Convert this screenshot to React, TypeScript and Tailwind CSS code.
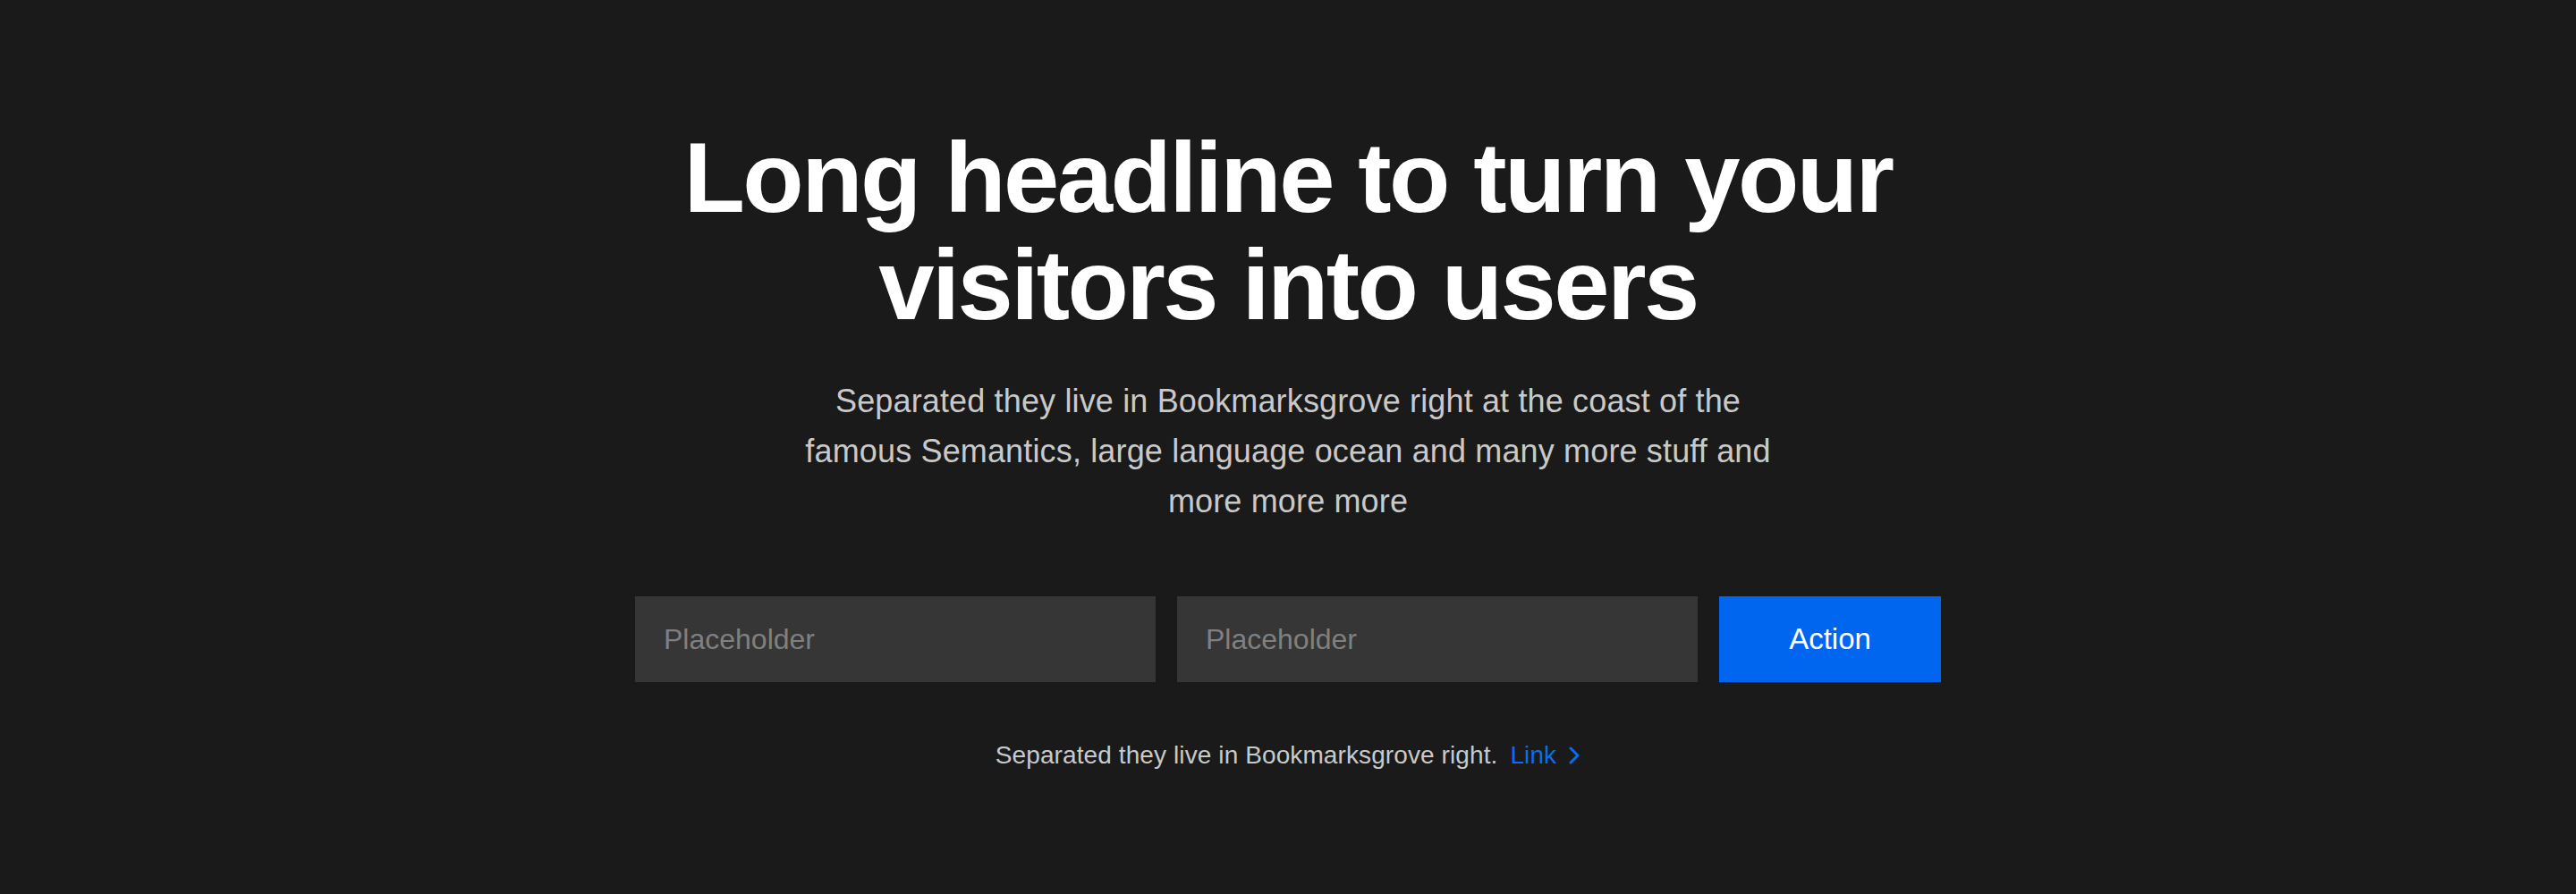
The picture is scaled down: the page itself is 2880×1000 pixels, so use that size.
import React from 'react';

const HeroSignup: React.FC = () => {
  return (
    <section className="h-[1000px] w-full overflow-hidden bg-[#1a1a1a] pt-[139px] font-['Liberation_Sans',Arial,sans-serif]">
      <div className="mx-auto flex w-full flex-col items-center">
        {/* Headline */}
        <h1 className="text-center text-[112px] font-bold leading-[120px] tracking-[-2.6px] text-white">
          Long headline to turn your
          <br />
          visitors into users
        </h1>

        <p className="mt-[42px] max-w-[1100px] text-center text-[36px] leading-[56px] tracking-[0.15px] text-[#c9c9c9]">
          Separated they live in Bookmarksgrove right at the coast of the famous Semantics, large language ocean and many
          more stuff and more more more
        </p>

        {/* Form */}
        <form className="mt-[78px] flex items-stretch gap-6" onSubmit={(e) => e.preventDefault()}>
          <input
            type="text"
            placeholder="Placeholder"
            className="h-[96px] w-[582px] bg-[#363636] px-8 text-[32px] text-white outline-none placeholder:text-[#808080]"
          />
          <input
            type="text"
            placeholder="Placeholder"
            className="h-[96px] w-[582px] bg-[#363636] px-8 text-[32px] text-white outline-none placeholder:text-[#808080]"
          />
          <button type="submit" className="h-[96px] w-[248px] bg-[#0066f0] text-[33px] text-white">
            Action
          </button>
        </form>

        <div className="mt-[62px] flex items-center text-[28px] leading-[40px] tracking-[0.1px] text-[#c9c9c9]">
          <span>Separated they live in Bookmarksgrove right.</span>
          <a href="#" className="ml-[14px] flex items-center text-[#0a6cf0]">
            Link
            <svg className="ml-[13px]" width="14" height="20" viewBox="0 0 14 20" fill="none">
              <polyline points="3,2 11,10 3,18" stroke="#0a6cf0" strokeWidth="3" strokeLinecap="round" strokeLinejoin="round" />
            </svg>
          </a>
        </div>
      </div>
    </section>
  );
};

export default function App() {
  return <HeroSignup />;
}
